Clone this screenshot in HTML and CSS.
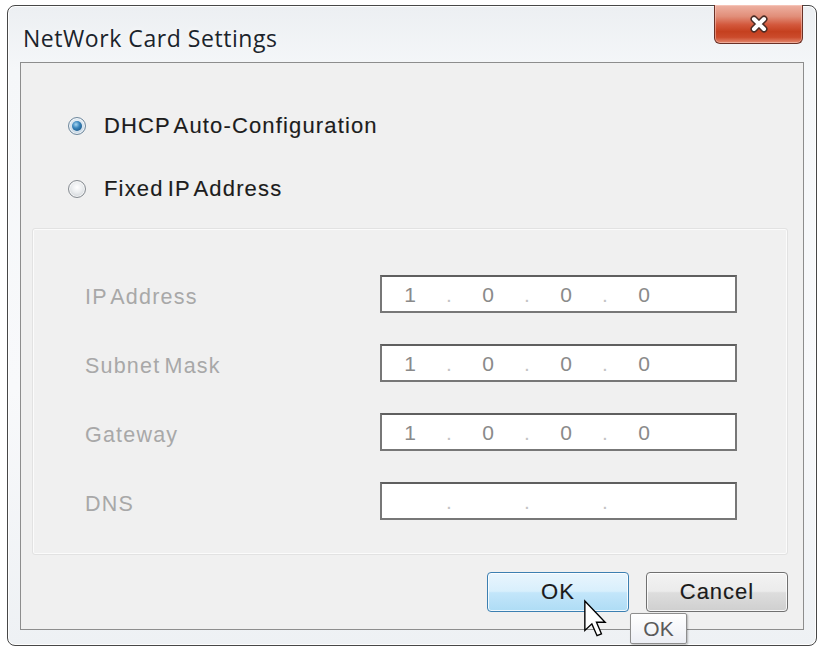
FILE: index.html
```html
<!DOCTYPE html>
<html lang="en">
<head>
<meta charset="utf-8">
<title>NetWork Card Settings</title>
<link rel="stylesheet" href="styles.css">
</head>
<body>
<div class="window">
  <div class="titlebar">
    <span class="title">NetWork Card Settings</span>
    <button class="close" type="button" aria-label="Close">
      <svg width="24" height="20" viewBox="0 0 24 20">
        <path d="M7 5 L17 15 M17 5 L7 15" stroke="#4a2c26" stroke-width="7" stroke-linecap="round"/>
        <path d="M7 5 L17 15 M17 5 L7 15" stroke="#ffffff" stroke-width="4" stroke-linecap="round"/>
      </svg>
    </button>
  </div>

  <div class="panel">
    <div class="modes">
      <label class="radio-row"><span class="radio checked"></span><span>DHCP Auto-Configuration</span></label>
      <label class="radio-row"><span class="radio"></span><span>Fixed IP Address</span></label>
    </div>

    <div class="group">
      <div class="field">
        <span class="field-label">IP Address</span>
        <div class="ip-box"><span class="octet">1</span><span class="dot">.</span><span class="octet">0</span><span class="dot">.</span><span class="octet">0</span><span class="dot">.</span><span class="octet">0</span></div>
      </div>
      <div class="field">
        <span class="field-label">Subnet Mask</span>
        <div class="ip-box"><span class="octet">1</span><span class="dot">.</span><span class="octet">0</span><span class="dot">.</span><span class="octet">0</span><span class="dot">.</span><span class="octet">0</span></div>
      </div>
      <div class="field">
        <span class="field-label">Gateway</span>
        <div class="ip-box"><span class="octet">1</span><span class="dot">.</span><span class="octet">0</span><span class="dot">.</span><span class="octet">0</span><span class="dot">.</span><span class="octet">0</span></div>
      </div>
      <div class="field">
        <span class="field-label">DNS</span>
        <div class="ip-box"><span class="octet"></span><span class="dot">.</span><span class="octet"></span><span class="dot">.</span><span class="octet"></span><span class="dot">.</span><span class="octet"></span></div>
      </div>
    </div>

    <div class="actions">
      <button class="btn btn-default" type="button">OK</button>
      <button class="btn" type="button">Cancel</button>
    </div>
  </div>

  <div class="tooltip">OK</div>
  <svg class="cursor" width="24" height="39" viewBox="0 0 13 21">
    <path d="M1 1 L1 17 L4.8 13.4 L7.6 19.8 L10 18.8 L7.3 12.5 L12 12.5 Z" fill="#ffffff" stroke="#000000" stroke-width="0.75" stroke-linejoin="miter"/>
  </svg>
</div>
</body>
</html>
```

FILE: styles.css
```css
* {
  box-sizing: border-box;
}

html,
body {
  margin: 0;
  background: #ffffff;
}

body {
  font-family: "Liberation Sans", Arial, sans-serif;
}

/* Dialog frame */
.window {
  position: relative;
  margin: 5px 0 0 7px;
  width: 810px;
  height: 641px;
  border: 1px solid #474747;
  border-radius: 8px;
  padding: 0 12px;
  background: linear-gradient(180deg, #eceff2 0%, #f5f7f9 10%, #f8f9fb 60%, #eef1f4 100%);
  box-shadow: inset 0 0 0 1px rgba(255, 255, 255, 0.9);
  display: flex;
  flex-direction: column;
}

.titlebar {
  height: 56px;
  display: flex;
  justify-content: space-between;
  align-items: flex-start;
  padding-left: 3px;
}

.title {
  margin-top: 17px;
  font-family: "Open Sans", "Noto Sans", sans-serif;
  font-size: 23px;
  line-height: 30px;
  letter-spacing: 0.55px;
  color: #1b242c;
  text-shadow: 0 0 6px rgba(255, 255, 255, 0.95);
}

.close {
  margin: -1px 1px 0 0;
  width: 89px;
  height: 39px;
  padding: 0;
  border: 1px solid #6a3127;
  border-top: none;
  border-radius: 0 0 6px 6px;
  background: linear-gradient(180deg, #eeb2a3 0%, #e18e79 30%, #d3583c 52%, #c5401f 70%, #cb4b2c 85%, #e48a70 100%);
  box-shadow: inset 0 0 0 1px rgba(255, 220, 210, 0.45);
  display: flex;
  align-items: center;
  justify-content: center;
}

/* Client area */
.panel {
  height: 568px;
  border: 1px solid #8d8d8d;
  background: #f0f0f0;
  display: flex;
  flex-direction: column;
}

.modes {
  height: 165px;
  padding: 48px 0 0 47px;
  display: flex;
  flex-direction: column;
  gap: 33px;
}

.radio-row {
  height: 30px;
  display: flex;
  align-items: center;
  gap: 18px;
  font-size: 22px;
  letter-spacing: 1.15px;
  word-spacing: -3px;
  color: #1c1c1c;
  -webkit-text-stroke: 0.15px #1c1c1c;
}

.radio {
  flex: none;
  width: 18px;
  height: 18px;
  border-radius: 50%;
  border: 1px solid #868b91;
  background: radial-gradient(circle at 50% 40%, #ffffff 0%, #eceef0 40%, #c4c9ce 100%);
  box-shadow: inset 0 0 0 1px rgba(255, 255, 255, 0.75);
  position: relative;
}

.radio.checked {
  border-color: #6f889d;
  background: radial-gradient(circle at 50% 40%, #f4f9fc 0%, #d6e3ee 50%, #aabfd0 100%);
}

.radio.checked::after {
  content: "";
  position: absolute;
  left: 3px;
  top: 3px;
  width: 10px;
  height: 10px;
  border-radius: 50%;
  background: radial-gradient(circle at 40% 35%, #a6d6f2 0%, #3a86bd 40%, #0d4574 100%);
}

/* Address group */
.group {
  height: 327px;
  margin: 0 15px 0 11px;
  border: 1px solid #e2e2e2;
  border-radius: 3px;
  box-shadow: inset 0 0 0 1px #fbfbfb;
  padding: 46px 0 0 52px;
  display: flex;
  flex-direction: column;
  gap: 31px;
}

.field {
  height: 38px;
  display: flex;
  align-items: center;
}

.field-label {
  width: 295px;
  padding-top: 6px;
  font-size: 21.5px;
  letter-spacing: 1.2px;
  word-spacing: -3px;
  color: #a8a8a8;
}

.ip-box {
  width: 357px;
  height: 38px;
  border: 2px solid #777777;
  border-top-color: #5f5f5f;
  background: #ffffff;
  padding: 2px 0 0 18px;
  display: flex;
  align-items: center;
  font-size: 21px;
  color: #8a8a8a;
}

.octet {
  width: 20px;
  text-align: center;
}

.dot {
  width: 58px;
  text-align: center;
  color: #c4c4c4;
}

/* Buttons */
.actions {
  margin-top: 17px;
  padding-right: 15px;
  display: flex;
  justify-content: flex-end;
  gap: 17px;
}

.btn {
  width: 142px;
  height: 40px;
  padding: 0;
  border: 1px solid #707070;
  border-radius: 4px;
  background: linear-gradient(180deg, #f3f3f3 0%, #ebebeb 48%, #dddddd 52%, #cfcfcf 100%);
  box-shadow: inset 0 0 0 1px rgba(255, 255, 255, 0.8);
  font-family: "Liberation Sans", Arial, sans-serif;
  font-size: 22px;
  letter-spacing: 1px;
  color: #1a1a1a;
  -webkit-text-stroke: 0.15px #1a1a1a;
}

.btn-default {
  border-color: #3c7fb1;
  background: linear-gradient(180deg, #e9f5fd 0%, #d8effc 48%, #c3e6fa 52%, #aedcf5 100%);
}

/* Hover tip and pointer */
.tooltip {
  position: absolute;
  left: 622px;
  top: 607px;
  width: 57px;
  height: 31px;
  border: 1px solid #8e8e8e;
  border-radius: 2px;
  background: linear-gradient(180deg, #ffffff 0%, #eceef4 100%);
  box-shadow: 1px 1px 2px rgba(0, 0, 0, 0.25);
  display: flex;
  align-items: center;
  justify-content: center;
  font-size: 21px;
  color: #5a5a5a;
}

.cursor {
  position: absolute;
  left: 575px;
  top: 593px;
}
```
